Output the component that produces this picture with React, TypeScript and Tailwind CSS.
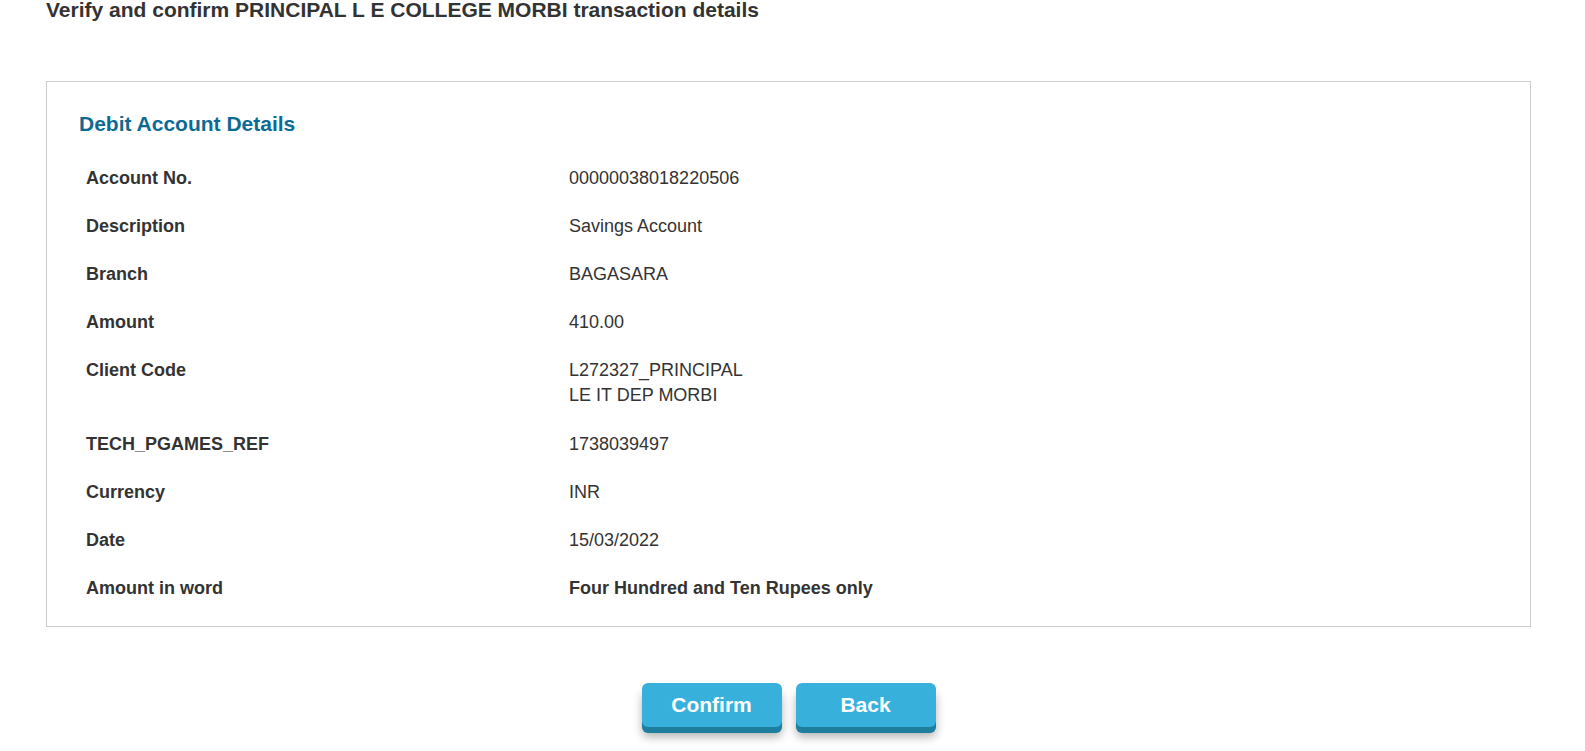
import React from 'react'

type Row = {
  label: string
  value: string[]
  strong?: boolean
}

const rows: Row[] = [
  { label: 'Account No.', value: ['00000038018220506'] },
  { label: 'Description', value: ['Savings Account'] },
  { label: 'Branch', value: ['BAGASARA'] },
  { label: 'Amount', value: ['410.00'] },
  { label: 'Client Code', value: ['L272327_PRINCIPAL', 'LE IT DEP MORBI'] },
  { label: 'TECH_PGAMES_REF', value: ['1738039497'] },
  { label: 'Currency', value: ['INR'] },
  { label: 'Date', value: ['15/03/2022'] },
  { label: 'Amount in word', value: ['Four Hundred and Ten Rupees only'], strong: true },
]

function ActionButton({ label }: { label: string }) {
  return (
    <button
      type="button"
      className="h-[44px] w-[140px] rounded-[6px] bg-[#38b0dc] text-[21px] font-bold text-white shadow-[0_6px_0_#1e7e9e,0_10px_10px_rgba(0,0,0,0.3)]"
    >
      {label}
    </button>
  )
}

export default function App() {
  return (
    <div className="min-h-[751px] bg-white font-['Liberation_Sans',Arial,sans-serif] text-[#333]">
      <div className="ml-[46px] w-[1485px]">
        <h1 className="-mt-[2px] text-[21px] font-bold leading-[24px] text-[#333]">
          Verify and confirm PRINCIPAL L E COLLEGE MORBI transaction details
        </h1>

        <div className="mt-[59px] border border-[#cccccc] px-[32px] pt-[30px] pb-[13px]">
          <h2 className="text-[21px] font-bold leading-[24px] text-[#0d6b93]">
            Debit Account Details
          </h2>

          <div className="mt-[18px] grid grid-cols-[483px_1fr] text-[18px] leading-[25px]">
            {rows.map((row) => (
              <React.Fragment key={row.label}>
                <div className="px-[7px] py-[11.6px] font-bold">{row.label}</div>
                <div className={`px-[7px] py-[11.6px] ${row.strong ? 'font-bold' : ''}`}>
                  {row.value.map((line) => (
                    <div key={line}>{line}</div>
                  ))}
                </div>
              </React.Fragment>
            ))}
          </div>
        </div>

        <div className="mt-[56px] flex justify-center gap-[14px]">
          <ActionButton label="Confirm" />
          <ActionButton label="Back" />
        </div>
      </div>
    </div>
  )
}
